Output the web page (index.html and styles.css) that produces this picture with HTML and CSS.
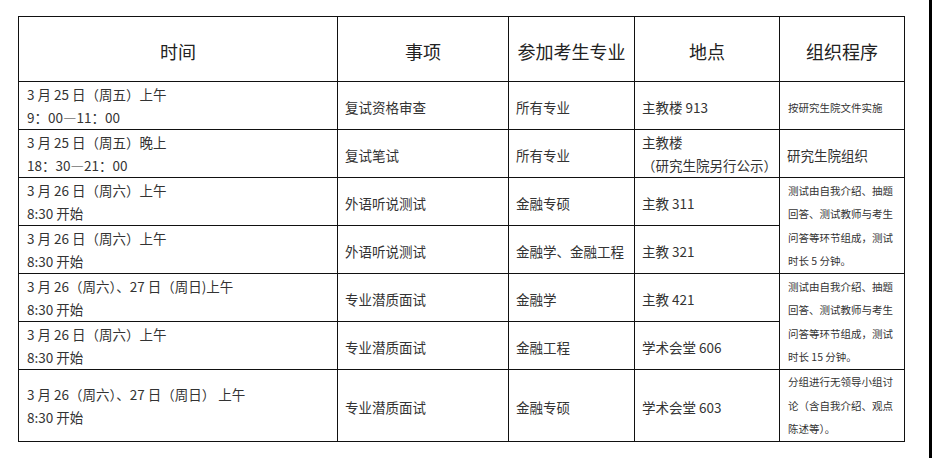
FILE: index.html
```html
<!DOCTYPE html>
<html lang="zh-CN">
<head>
<meta charset="utf-8">
<title>复试安排</title>
<link rel="stylesheet" href="styles.css">
</head>
<body>
<div class="page">
  <table class="sched">
    <colgroup>
      <col class="c-time">
      <col class="c-item">
      <col class="c-major">
      <col class="c-place">
      <col class="c-proc">
    </colgroup>
    <thead>
      <tr class="r-head">
        <th>时间</th>
        <th>事项</th>
        <th>参加考生专业</th>
        <th>地点</th>
        <th>组织程序</th>
      </tr>
    </thead>
    <tbody>
      <tr class="r1">
        <td class="time">3 月 25 日（周五）上午<br>9：00—11：00</td>
        <td>复试资格审查</td>
        <td>所有专业</td>
        <td>主教楼 913</td>
        <td class="small">按研究生院文件实施</td>
      </tr>
      <tr class="r2">
        <td class="time">3 月 25 日（周五）晚上<br>18：30—21：00</td>
        <td>复试笔试</td>
        <td>所有专业</td>
        <td class="two">主教楼<br>（研究生院另行公示）</td>
        <td>研究生院组织</td>
      </tr>
      <tr class="r3">
        <td class="time">3 月 26 日（周六）上午<br>8:30 开始</td>
        <td>外语听说测试</td>
        <td>金融专硕</td>
        <td>主教 311</td>
        <td class="small multi" rowspan="2">测试由自我介绍、抽题<br>回答、测试教师与考生<br>问答等环节组成，测试<br>时长 5 分钟。</td>
      </tr>
      <tr class="r4">
        <td class="time">3 月 26 日（周六）上午<br>8:30 开始</td>
        <td>外语听说测试</td>
        <td>金融学、金融工程</td>
        <td>主教 321</td>
      </tr>
      <tr class="r5">
        <td class="time">3 月 26（周六）、27 日（周日)上午<br>8:30 开始</td>
        <td>专业潜质面试</td>
        <td>金融学</td>
        <td>主教 421</td>
        <td class="small multi" rowspan="2">测试由自我介绍、抽题<br>回答、测试教师与考生<br>问答等环节组成，测试<br>时长 15 分钟。</td>
      </tr>
      <tr class="r6">
        <td class="time">3 月 26 日（周六）上午<br>8:30 开始</td>
        <td>专业潜质面试</td>
        <td>金融工程</td>
        <td>学术会堂 606</td>
      </tr>
      <tr class="r7">
        <td class="time">3 月 26（周六）、27 日（周日） 上午<br>8:30 开始</td>
        <td>专业潜质面试</td>
        <td>金融专硕</td>
        <td>学术会堂 603</td>
        <td class="small multi">分组进行无领导小组讨<br>论（含自我介绍、观点<br>陈述等）。</td>
      </tr>
    </tbody>
  </table>
</div>
<div class="edge"></div>
</body>
</html>
```
FILE: styles.css
```css
html, body {
  margin: 0;
  padding: 0;
  background: #ffffff;
}

body {
  font-family: "Noto Sans CJK SC", sans-serif;
  color: #333333;
  width: 932px;
  height: 458px;
  overflow: hidden;
}

.page {
  padding: 16px 0 0 18px;
}

.sched {
  border-collapse: collapse;
  table-layout: fixed;
  width: 886px;
}

.c-time { width: 319px; }
.c-item { width: 171px; }
.c-major { width: 126px; }
.c-place { width: 145px; }
.c-proc { width: 125px; }

.sched th,
.sched td {
  border: 1px solid #111111;
  padding: 0;
  vertical-align: middle;
}

.sched th {
  font-weight: normal;
  font-size: 18px;
  color: #222222;
  text-align: center;
  line-height: 24px;
  padding-top: 3px;
}

.sched td {
  font-size: 13.5px;
  line-height: 23px;
  text-align: left;
  padding: 4px 4px 0 7px;
  white-space: nowrap;
}

.sched td.time {
  padding-left: 8px;
  padding-top: 1px;
}

.sched td.two {
  padding-top: 1px;
}

.sched td.small {
  font-size: 10.5px;
  padding-left: 8px;
}

.sched td.multi {
  line-height: 23.5px;
  padding-top: 0;
}

.r-head { height: 65px; }
.r1 { height: 48px; }
.r2 { height: 48px; }
.r3 { height: 48px; }
.r4 { height: 48px; }
.r5 { height: 48px; }
.r6 { height: 47px; }
.r7 { height: 72px; }

.edge {
  position: fixed;
  top: 0;
  right: 0;
  width: 3px;
  height: 100%;
  background: #000000;
}
```
